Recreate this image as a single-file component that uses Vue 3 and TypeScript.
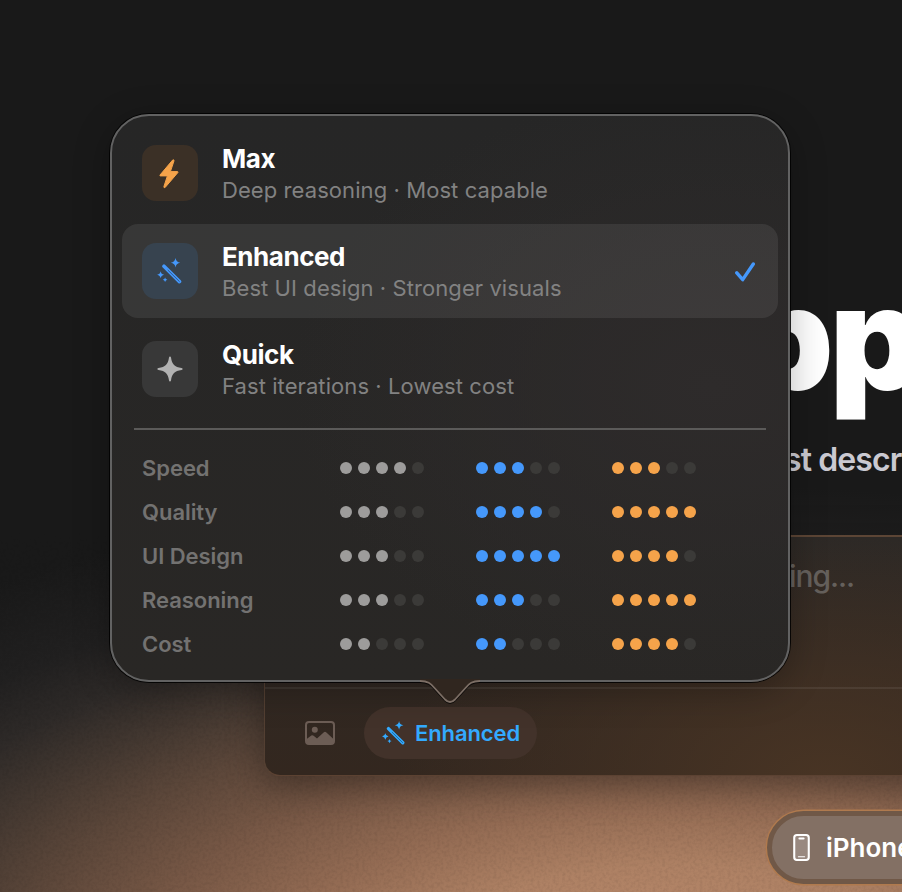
<script setup lang="ts">
interface Mode {
  id: 'max' | 'enhanced' | 'quick'
  name: string
  detail: string
  selected: boolean
}

interface Metric {
  label: string
  scores: { tone: 'gray' | 'blue' | 'orange'; value: number }[]
}

const modes: Mode[] = [
  { id: 'max', name: 'Max', detail: 'Deep reasoning · Most capable', selected: false },
  { id: 'enhanced', name: 'Enhanced', detail: 'Best UI design · Stronger visuals', selected: true },
  { id: 'quick', name: 'Quick', detail: 'Fast iterations · Lowest cost', selected: false },
]

const metric = (label: string, quick: number, enhanced: number, max: number): Metric => ({
  label,
  scores: [
    { tone: 'gray', value: quick },
    { tone: 'blue', value: enhanced },
    { tone: 'orange', value: max },
  ],
})

const metrics: Metric[] = [
  metric('Speed', 4, 3, 3),
  metric('Quality', 3, 4, 5),
  metric('UI Design', 3, 5, 4),
  metric('Reasoning', 3, 3, 5),
  metric('Cost', 2, 2, 4),
]
</script>

<template>
  <div class="page">
    <svg class="grain" width="902" height="372">
      <filter id="grain">
        <feTurbulence type="fractalNoise" baseFrequency="0.32" numOctaves="2" seed="4" />
        <feColorMatrix type="matrix" values="0 0 0 0 0  0 0 0 0 0  0 0 0 0 0  0.9 0 0 0 -0.36" />
      </filter>
      <rect width="902" height="372" filter="url(#grain)" />
    </svg>
    <main class="hero">
      <h1 class="title">pp</h1>
      <p class="tagline">st descr</p>
      <section class="composer">
        <div class="prompt">ing...</div>
        <div class="toolbar">
          <svg class="photo" viewBox="0 0 30 24">
            <rect x="1" y="1" width="28" height="22" rx="3" fill="none" stroke="currentColor" stroke-width="2" />
            <circle cx="9.8" cy="8.8" r="3" fill="currentColor" />
            <path d="M1 18.5 6.3 14.6Q7.500 13.800 8.600 14.800L12 17.600 18.600 11.400Q20 10.200 21.400 11.400L29 18.600V21Q29 23 27 23H3Q1 23 1 21Z" fill="currentColor" />
          </svg>
          <button class="mode-pill">
            <svg class="wand" viewBox="0 0 26 26">
              <path d="M7 8.2 22.5 23.6" stroke="currentColor" stroke-width="3.6" stroke-linecap="round" />
              <path class="core" d="M11 12.2 22.3 23.4" stroke-width="0.9" stroke-linecap="round" />
              <path fill="currentColor" d="M18.5 0Q19.1 4.1 23.2 4.7 19.1 5.3 18.5 9.4 17.9 5.3 13.8 4.7 17.9 4.1 18.5 0ZM3.6 13.3Q4.1 16.3 7.1 16.8 4.1 17.3 3.6 20.3 3.1 17.3 .1 16.8 3.1 16.3 3.6 13.3ZM8.1 19.4Q8.5 21.3 10.4 21.7 8.5 22.1 8.1 24 7.7 22.1 5.8 21.7 7.7 21.3 8.1 19.4Z" />
            </svg>
            <span>Enhanced</span>
          </button>
        </div>
      </section>
      <div class="device">
        <svg class="phone" viewBox="0 0 16 26">
          <rect x="1" y="1" width="14" height="24" rx="2.6" fill="rgba(255,255,255,.18)" stroke="#fff" stroke-width="2" />
          <path d="M6 4.300H10" stroke="#fff" stroke-width="2" stroke-linecap="round" />
          <path d="M5 22H11" stroke="#fff" stroke-width="1" stroke-linecap="round" />
        </svg>
        <span>iPhone</span>
      </div>
    </main>

    <div class="popover">
      <ul class="modes">
        <li v-for="mode in modes" :key="mode.id" class="mode" :class="{ selected: mode.selected }">
          <div class="tile" :class="mode.id">
            <svg v-if="mode.id === 'max'" class="bolt" viewBox="0 0 20 30">
              <path fill="currentColor" stroke="currentColor" stroke-width="1" stroke-linejoin="round" d="M13.6 1.1 1 16Q.6 16.8 1.4 16.9H8.4L4.9 27.6Q4.8 29.3 6.1 28.5L18.9 13.5Q19.3 12.7 18.4 12.6H11.4L15 1.8Q15 .2 13.6 1.1Z" />
            </svg>
            <svg v-else-if="mode.id === 'enhanced'" class="wand" viewBox="0 0 26 26">
              <path d="M7 8.2 22.5 23.6" stroke="currentColor" stroke-width="3.6" stroke-linecap="round" />
              <path class="core" d="M11 12.2 22.3 23.4" stroke-width="0.9" stroke-linecap="round" />
              <path fill="currentColor" d="M18.5 0Q19.1 4.1 23.2 4.7 19.1 5.3 18.5 9.4 17.9 5.3 13.8 4.7 17.9 4.1 18.5 0ZM3.6 13.3Q4.1 16.3 7.1 16.8 4.1 17.3 3.6 20.3 3.1 17.3 .1 16.8 3.1 16.3 3.6 13.3ZM8.1 19.4Q8.5 21.3 10.4 21.7 8.5 22.1 8.1 24 7.7 22.1 5.8 21.7 7.7 21.3 8.1 19.4Z" />
            </svg>
            <svg v-else class="spark" viewBox="0 0 26 26">
              <path fill="currentColor" d="M13 .4Q13.8.4 14 1.5C15 8.4 17.6 11 24.5 12Q25.6 12.2 25.6 13T24.5 14C17.6 15 15 17.6 14 24.5Q13.8 25.6 13 25.6T12 24.5C11 17.6 8.4 15 1.5 14Q.4 13.8.4 13T1.5 12C8.4 11 11 8.4 12 1.5Q12.2.4 13 .4Z" />
            </svg>
          </div>
          <div class="copy">
            <div class="name">{{ mode.name }}</div>
            <div class="detail">{{ mode.detail }}</div>
          </div>
          <svg v-if="mode.selected" class="check" viewBox="0 0 20 20">
            <path d="M1.800 10.900 7.700 17.600 18.300 2" fill="none" stroke="currentColor" stroke-width="3.400" stroke-linecap="round" stroke-linejoin="round" />
          </svg>
        </li>
      </ul>
      <div class="rule"></div>
      <div class="metrics">
        <div v-for="row in metrics" :key="row.label" class="metric">
          <span class="label">{{ row.label }}</span>
          <div v-for="score in row.scores" :key="score.tone" class="dots" :class="score.tone">
            <i v-for="n in 5" :key="n" :class="{ on: n <= score.value }"></i>
          </div>
        </div>
      </div>
      <svg class="arrow" viewBox="0 0 68 28">
        <path class="arrow-fill" d="M4 2C12 2 14.500 4.500 18.500 9L29 20.500Q34 25.500 39 20.500L49.500 9C53.500 4.500 56 2 64 2V0H4Z" />
        <path class="arrow-shade" d="M4 3.200C12 3.200 14.500 5.700 18.500 10.200L29 21.700Q34 26.700 39 21.700L49.500 10.200C53.500 5.700 56 3.200 64 3.200" />
        <path class="arrow-line" d="M4 2C12 2 14.500 4.500 18.500 9L29 20.500Q34 25.500 39 20.500L49.500 9C53.500 4.500 56 2 64 2" />
      </svg>
    </div>
  </div>
</template>

<style>
body {
  margin: 0;
  background: #191919;
}
</style>

<style scoped>
.page {
  position: relative;
  box-sizing: border-box;
  width: 902px;
  height: 892px;
  overflow: hidden;
  font-family: Inter, 'Liberation Sans', sans-serif;
  background:
    radial-gradient(ellipse 1000px 440px at 680px 990px, #bd8d6e 0%, #ae8164 28%, #936b53 42%, #765745 56%, #5c473a 68%, #423730 79%, #2e2a28 88%, #212020 98%, #191919 115%);
}
.grain {
  position: absolute;
  left: 0;
  bottom: 0;
  opacity: 0.16;
  mask-image: linear-gradient(transparent, #000 50%);
}
.hero {
  position: relative;
  display: flex;
  flex-direction: column;
  width: 902px;
  padding-top: 253px;
  box-sizing: border-box;
}
.title {
  margin: 0 0 0 740px;
  height: 170px;
  line-height: 170px;
  font-size: 145px;
  font-weight: 900;
  letter-spacing: -4px;
  color: #fff;
  white-space: nowrap;
}
.tagline {
  margin: 17px 0 0 784px;
  height: 40px;
  line-height: 40px;
  font-size: 32px;
  font-weight: 600;
  letter-spacing: -0.900px;
  color: #cac9d1;
  white-space: nowrap;
}
.composer {
  box-sizing: border-box;
  margin: 55px 0 0 264px;
  width: 680px;
  height: 241px;
  border: 1px solid #70503b;
  border-top: 2px solid #5c4535;
  border-left-color: #533f32;
  border-bottom-color: #5c4232;
  border-radius: 16px;
  background: radial-gradient(ellipse 430px 240px at 560px 240px, #483424, rgba(72, 52, 36, 0)), linear-gradient(180deg, #2d2926, #33271f);
  box-shadow: 0 10px 36px rgba(0, 0, 0, 0.36);
}
.prompt {
  box-sizing: border-box;
  height: 150px;
  padding: 19px 0 0 524px;
  line-height: 40px;
  font-size: 30px;
  font-weight: 500;
  letter-spacing: -1.100px;
  color: #65605c;
}
.toolbar {
  display: flex;
  align-items: center;
  gap: 29px;
  height: 87px;
  box-sizing: border-box;
  padding: 2px 0 0 40px;
  border-top: 2px solid rgba(255, 255, 255, 0.07);
}
.photo {
  width: 30px;
  height: 24px;
  color: #6c5d55;
}
.mode-pill {
  display: flex;
  align-items: center;
  gap: 9px;
  box-sizing: border-box;
  width: 173px;
  height: 52px;
  padding: 0 0 0 18px;
  border: 0;
  border-radius: 26px;
  background: #42322a;
  color: #33aaff;
  font-family: inherit;
  font-size: 22px;
  font-weight: 600;
  letter-spacing: -0.100px;
}
.mode-pill .wand {
  width: 24px;
  height: 24px;
}
.mode-pill .core {
  stroke: #1b5d8f;
}
.device {
  display: flex;
  align-items: center;
  gap: 16px;
  box-sizing: border-box;
  margin: 35px 0 0 767px;
  width: 240px;
  height: 73px;
  padding-left: 21px;
  border: 5px solid #705847;
  border-radius: 37px;
  background: #837064;
  box-shadow: 0 0 0 1.500px #b07a4e;
  color: #fff;
  font-size: 26px;
  font-weight: 600;
}
.phone {
  width: 17px;
  height: 27px;
}

.popover {
  position: absolute;
  left: 110px;
  top: 114px;
  box-sizing: border-box;
  width: 680px;
  height: 568px;
  padding: 10px;
  border: 2px solid #626262;
  border-radius: 39px;
  background: radial-gradient(ellipse 420px 300px at 600px 270px, #2e2b2b, rgba(46, 43, 43, 0)), linear-gradient(#262626, #292725);
  box-shadow: 0 0 0 1px rgba(0, 0, 0, 0.85), 0 8px 36px rgba(0, 0, 0, 0.28);
}
.modes {
  display: flex;
  flex-direction: column;
  gap: 4px;
  margin: 0;
  padding: 0;
  list-style: none;
}
.mode {
  display: flex;
  align-items: center;
  box-sizing: border-box;
  height: 94px;
  padding: 0 23px 0 20px;
  border-radius: 16px;
}
.mode.selected {
  background: rgba(255, 255, 255, 0.08);
}
.tile {
  display: grid;
  place-items: center;
  width: 56px;
  height: 56px;
  margin-right: 24px;
  border-radius: 14px;
}
.tile.max {
  background: #3b3026;
  color: #f5a34a;
}
.tile.enhanced {
  background: #37434f;
  color: #4598fb;
}
.tile.quick {
  background: #383838;
  color: #b1b1b1;
}
.tile .bolt {
  width: 20px;
  height: 30px;
  margin: 2px 2px 0 0;
}
.tile .wand {
  width: 26px;
  height: 26px;
}
.tile .core {
  stroke: #2c5483;
}
.tile .spark {
  width: 26px;
  height: 26px;
}
.copy {
  flex: 1;
  padding-top: 2px;
}
.name {
  line-height: 32px;
  font-size: 26px;
  font-weight: 700;
  letter-spacing: -0.450px;
  color: #fff;
}
.detail {
  line-height: 30px;
  font-size: 22px;
  font-weight: 400;
  letter-spacing: 0.080px;
  color: #828282;
}
.check {
  width: 20px;
  height: 20px;
  margin-top: 2px;
  color: #4598fb;
}
.rule {
  height: 2px;
  margin: 12px 12px 0;
  background: #5b5a59;
}
.metrics {
  display: flex;
  flex-direction: column;
  padding: 16px 0 0 20px;
}
.metric {
  display: grid;
  grid-template-columns: 198px 136px 136px 136px;
  align-items: center;
  height: 44px;
}
.label {
  font-size: 22px;
  font-weight: 600;
  letter-spacing: -0.050px;
  color: #737271;
}
.dots {
  display: flex;
  gap: 6px;
}
.dots i {
  width: 12px;
  height: 12px;
  border-radius: 50%;
  background: #3b3a38;
}
.gray .on {
  background: #9d9c9b;
}
.blue .on {
  background: #4598fb;
}
.orange .on {
  background: #f5a34a;
}
.arrow {
  position: absolute;
  left: 304px;
  top: 563px;
  width: 68px;
  height: 28px;
}
.arrow-fill {
  fill: #30261f;
}
.arrow-shade {
  fill: none;
  stroke: rgba(0, 0, 0, 0.7);
  stroke-width: 1.500;
}
.arrow-line {
  fill: none;
  stroke: #7c6e65;
  stroke-width: 1.800;
}
</style>
